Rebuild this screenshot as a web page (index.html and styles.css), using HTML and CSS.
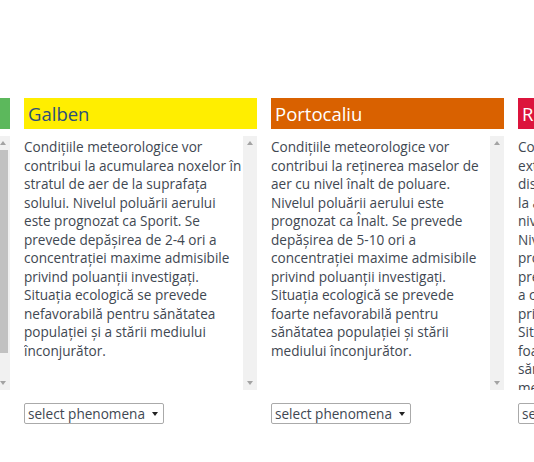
FILE: index.html
```html
<!DOCTYPE html>
<html lang="ro">
<head>
	<meta charset="UTF-8"/>
	<meta name="viewport" content="width=device-width, initial-scale=1.0"/>
	<title>Coduri de culoare</title>
	<link rel="stylesheet" href="styles.css">
</head>
<body>
	<div class="slider">
		<div class="track">

			<div class="level">
				<h2 class="verde">Verde</h2>
				<div class="box">
					<div class="text">
						<p>Condiţiile meteorologice vor contribui la dispersia noxelor în atmosferă. Nivelul poluării aerului este prognozat ca Scăzut. Concentraţiile poluanţilor investigaţi nu vor depăşi valorile maxime admisibile. Situaţia ecologică se prevede favorabilă pentru sănătatea populaţiei şi a stării mediului înconjurător.</p>
					</div>
					<div class="bar">
						<span class="arrow up"></span>
						<span class="rail"><span class="thumb"></span></span>
						<span class="arrow down"></span>
					</div>
				</div>
				<div class="pick"><select><option>select phenomena</option></select></div>
			</div>

			<div class="level">
				<h2 class="galben">Galben</h2>
				<div class="box">
					<div class="text">
						<p>Condiţiile meteorologice vor contribui la acumularea noxelor în stratul de aer de la suprafaţa solului. Nivelul poluării aerului este prognozat ca Sporit. Se prevede depăşirea de 2-4 ori a concentraţiei maxime admisibile privind poluanţii investigaţi. Situaţia ecologică se prevede nefavorabilă pentru sănătatea populaţiei şi a stării mediului înconjurător.</p>
					</div>
					<div class="bar">
						<span class="arrow up"></span>
						<span class="rail"></span>
						<span class="arrow down"></span>
					</div>
				</div>
				<div class="pick"><select><option>select phenomena</option></select></div>
			</div>

			<div class="level">
				<h2 class="portocaliu">Portocaliu</h2>
				<div class="box">
					<div class="text">
						<p>Condiţiile meteorologice vor contribui la reținerea maselor de aer cu nivel înalt de poluare. Nivelul poluării aerului este prognozat ca Înalt. Se prevede depăşirea de 5-10 ori a concentraţiei maxime admisibile privind poluanţii investigaţi. Situaţia ecologică se prevede foarte nefavorabilă pentru sănătatea populaţiei şi stării mediului înconjurător.</p>
					</div>
					<div class="bar">
						<span class="arrow up"></span>
						<span class="rail"></span>
						<span class="arrow down"></span>
					</div>
				</div>
				<div class="pick"><select><option>select phenomena</option></select></div>
			</div>

			<div class="level">
				<h2 class="rosu">Roşu</h2>
				<div class="box">
					<div class="text">
						<p>Condiţiile meteorologice vor fi extrem de nefavorabile pentru dispersia noxelor şi vor contribui la acumularea maselor de aer cu nivel foarte înalt de poluare. Nivelul poluării aerului este prognozat ca Foarte înalt. Se prevede depăşirea de peste 10 ori a concentraţiei maxime admisibile privind poluanţii investigaţi. Situaţia ecologică se prevede foarte nefavorabilă pentru sănătatea populaţiei şi stării mediului înconjurător.</p>
					</div>
					<div class="bar">
						<span class="arrow up"></span>
						<span class="rail"><span class="thumb"></span></span>
						<span class="arrow down"></span>
					</div>
				</div>
				<div class="pick"><select><option>select phenomena</option></select></div>
			</div>

		</div>
	</div>
</body>
</html>
```

FILE: styles.css
```css
*{
	font-family: "Open Sans", sans-serif;
	margin: 0;
	padding: 0;
	box-sizing: border-box;
}
body{
	background: #fff;
	overflow: hidden;
}
.slider{
	overflow: hidden;
	padding-top: 98px;
}
.track{
	display: flex;
	gap: 14px;
	margin-left: -223px;
}
.level{
	flex: 0 0 233px;
	display: flex;
	flex-direction: column;
}
.level h2{
	font-size: 18.5px;
	font-weight: 400;
	height: 31px;
	line-height: 31px;
	padding: 0 4px;
	color: #fff;
}
.verde{
	background: #5cb85c;
}
.level .galben{
	background: #ffee00;
	color: #2c4f7c;
}
.portocaliu{
	background: #d96100;
}
.rosu{
	background: #dc143c;
}

.box{
	margin-top: 7px;
	height: 254px;
	display: flex;
}
.text{
	flex: 1;
	overflow: hidden;
	padding-top: 2px;
	color: #3f4852;
	font-size: 13.6px;
	line-height: 18.5px;
}

/* scrollbar drawn by hand */
.bar{
	flex: 0 0 14px;
	display: flex;
	flex-direction: column;
	background: #f1f1f1;
}
.arrow{
	height: 14px;
	display: flex;
	justify-content: center;
	align-items: center;
}
.arrow::before{
	content: "";
	width: 0;
	height: 0;
	border-left: 3.5px solid transparent;
	border-right: 3.5px solid transparent;
}
.up::before{
	border-bottom: 4px solid #a3a3a3;
}
.down::before{
	border-top: 4px solid #a3a3a3;
}
.rail{
	flex: 1;
	padding: 0 2px;
}
.thumb{
	display: block;
	height: 203px;
	background: #c1c1c1;
}

.pick{
	margin-top: 13px;
	position: relative;
	align-self: flex-start;
}
.pick::after{
	content: "";
	position: absolute;
	right: 6px;
	top: 9px;
	border-left: 3px solid transparent;
	border-right: 3px solid transparent;
	border-top: 4px solid #222;
	pointer-events: none;
}
select{
	-webkit-appearance: none;
	appearance: none;
	display: block;
	font-size: 13.6px;
	color: #3f4852;
	height: 21px;
	padding: 0 18px 0 3px;
	border: 1px solid #aaa;
	border-radius: 2px;
	background: #fff;
}
```
